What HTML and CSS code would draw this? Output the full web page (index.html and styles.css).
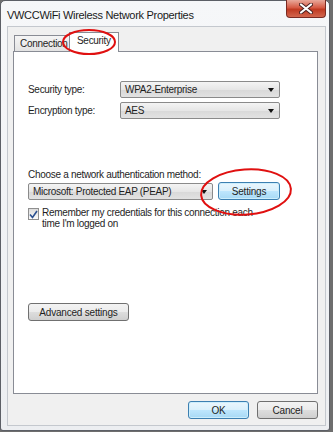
FILE: index.html
```html
<!DOCTYPE html>
<html lang="en">
<head>
    <meta charset="UTF-8">
    <meta name="viewport" content="width=device-width, initial-scale=1.0">
    <title>VWCCWiFi Wireless Network Properties</title>
    <link rel="stylesheet" href="styles.css">
</head>
<body>
    <div class="window">
        <div class="titlebar">
            <span class="title">VWCCWiFi Wireless Network Properties</span>
            <button class="close-button">
                <svg width="14" height="11" viewBox="0 0 14 11">
                    <path d="M2 1.5 L12 9.5 M12 1.5 L2 9.5" stroke="#4a2020" stroke-width="4" stroke-linecap="round"/>
                    <path d="M2 1.5 L12 9.5 M12 1.5 L2 9.5" stroke="#ffffff" stroke-width="2.2" stroke-linecap="round"/>
                </svg>
            </button>
        </div>

        <div class="client">
            <div class="tabs">
                <div class="tab">Connection</div>
                <div class="tab active">Security</div>
            </div>

            <div class="panel">
                <div class="field-row">
                    <span class="field-label">Security type:</span>
                    <div class="dropdown wide">WPA2-Enterprise<span class="arrow"></span></div>
                </div>
                <div class="field-row">
                    <span class="field-label">Encryption type:</span>
                    <div class="dropdown wide">AES<span class="arrow"></span></div>
                </div>

                <div class="auth-label">Choose a network authentication method:</div>
                <div class="auth-row">
                    <div class="dropdown auth">Microsoft: Protected EAP (PEAP)<span class="arrow"></span></div>
                    <button class="btn blue settings">Settings</button>
                </div>
                <div class="check-row">
                    <span class="checkbox">
                        <svg width="9" height="9" viewBox="0 0 9 9">
                            <path d="M1 4.5 L3.5 7.5 L8 1" fill="none" stroke="#2a4f8f" stroke-width="1.6"/>
                        </svg>
                    </span>
                    <span class="check-text">Remember my credentials for this connection each time I'm logged on</span>
                </div>

                <button class="btn advanced">Advanced settings</button>
            </div>

            <div class="footer">
                <button class="btn blue">OK</button>
                <button class="btn">Cancel</button>
            </div>
        </div>

        <!-- red marker circles drawn over the screenshot -->
        <svg class="marker marker-tab" width="56" height="28" viewBox="0 0 56 28">
            <ellipse cx="28" cy="14" rx="26" ry="12" fill="none" stroke="#e01010" stroke-width="2"/>
        </svg>
        <svg class="marker marker-settings" width="94" height="50" viewBox="0 0 94 50">
            <ellipse cx="47" cy="25" rx="45" ry="22.5" fill="none" stroke="#e01010" stroke-width="2" transform="rotate(-4 47 25)"/>
        </svg>
    </div>
</body>
</html>
```

FILE: styles.css
```css
body {
    margin: 0;
    background-color: #6e6e6e;
    font-family: "Liberation Sans", Arial, sans-serif;
    font-size: 10px;
    letter-spacing: -0.3px;
    color: #1e1e1e;
}

.window {
    position: relative;
    width: 328px;
    height: 429px;
    display: flex;
    flex-direction: column;
    background: linear-gradient(#f6f7f9, #eceef1);
    border: 1px solid #5c5f66;
    border-radius: 5px 5px 3px 3px;
}

.titlebar {
    height: 25px;
    display: flex;
    align-items: flex-start;
    justify-content: space-between;
    padding-left: 6px;
    padding-right: 3px;
}

.title {
    font-size: 11px;
    margin-top: 8px;
    color: #1a1a1a;
}

.close-button {
    width: 40px;
    height: 18px;
    margin-top: -1px;
    padding: 0;
    border: 1px solid #7a2a22;
    border-top: none;
    border-radius: 0 0 4px 4px;
    background: linear-gradient(#e9a99b, #d65a44 45%, #c03a22 55%, #d2664e);
    display: flex;
    align-items: center;
    justify-content: center;
}

.client {
    flex: 1;
    display: flex;
    flex-direction: column;
    background-color: #f0f0f0;
    margin: 0 3px 4px 6px;
    padding: 4px 7px 6px 5px;
    border: 1px solid #c4c8ce;
}

.tabs {
    display: flex;
    align-items: flex-end;
    height: 20px;
    padding-left: 1px;
    position: relative;
    z-index: 1;
}

.tab {
    height: 15px;
    padding: 0 0 0 5px;
    line-height: 15px;
    border: 1px solid #898c95;
    border-bottom: none;
    background: linear-gradient(#f5f5f5, #e3e3e3);
    width: 50px;
    overflow: hidden;
    white-space: nowrap;
}

.tab.active {
    height: 19px;
    line-height: 16px;
    width: 41px;
    padding-left: 7px;
    margin-left: -2px;
    margin-bottom: -1px;
    background: #ffffff;
}

.panel {
    flex: 1;
    background: #ffffff;
    border: 1px solid #898c95;
    padding: 29px 0 0 14px;
    display: flex;
    flex-direction: column;
    align-items: flex-start;
}

.field-row {
    display: flex;
    align-items: center;
    margin-bottom: 4px;
}

.field-label {
    width: 92px;
}

.dropdown {
    position: relative;
    height: 15px;
    line-height: 15px;
    padding-left: 4px;
    border: 1px solid #8a8a8a;
    border-radius: 2px;
    background: linear-gradient(#f4f4f4, #e6e6e6 50%, #d8d8d8 51%, #e2e2e2);
    white-space: nowrap;
}

.dropdown.wide {
    width: 154px;
}

.dropdown.auth {
    width: 179px;
}

.arrow {
    position: absolute;
    right: 5px;
    top: 6px;
    border-left: 3px solid transparent;
    border-right: 3px solid transparent;
    border-top: 4px solid #111;
}

.auth-label {
    margin-top: 46px;
    line-height: 12px;
}

.auth-row {
    display: flex;
    align-items: center;
    gap: 5px;
    margin-top: 1px;
}

.btn {
    height: 18px;
    padding: 0;
    font-family: inherit;
    font-size: 10px;
    letter-spacing: -0.2px;
    color: #1e1e1e;
    border: 1px solid #707070;
    border-radius: 3px;
    background: linear-gradient(#f3f3f3, #ebebeb 50%, #dddddd 51%, #cfcfcf);
    width: 61px;
}

.btn.blue {
    border-color: #3c7fb1;
    background: linear-gradient(#eaf6fd, #d9f0fc 50%, #bee6fd 51%, #a7d9f5);
    box-shadow: inset 0 0 0 1px #cdeefc;
}

.settings {
    width: 62px;
}

.check-row {
    display: flex;
    align-items: flex-start;
    gap: 3px;
    margin-top: 7px;
    width: 230px;
}

.checkbox {
    width: 10px;
    height: 10px;
    margin-top: 1px;
    border: 1px solid #8f8f8f;
    background: linear-gradient(#dcdcdc, #fbfbfb);
    display: flex;
    align-items: center;
    justify-content: center;
}

.check-text {
    line-height: 11px;
}

.advanced {
    width: 101px;
    margin-top: 74px;
}

.footer {
    display: flex;
    justify-content: flex-end;
    gap: 8px;
    margin-top: 7px;
}

.marker {
    position: absolute;
    z-index: 2;
}

.marker-tab {
    left: 60px;
    top: 27px;
}

.marker-settings {
    left: 198px;
    top: 166px;
}
```
